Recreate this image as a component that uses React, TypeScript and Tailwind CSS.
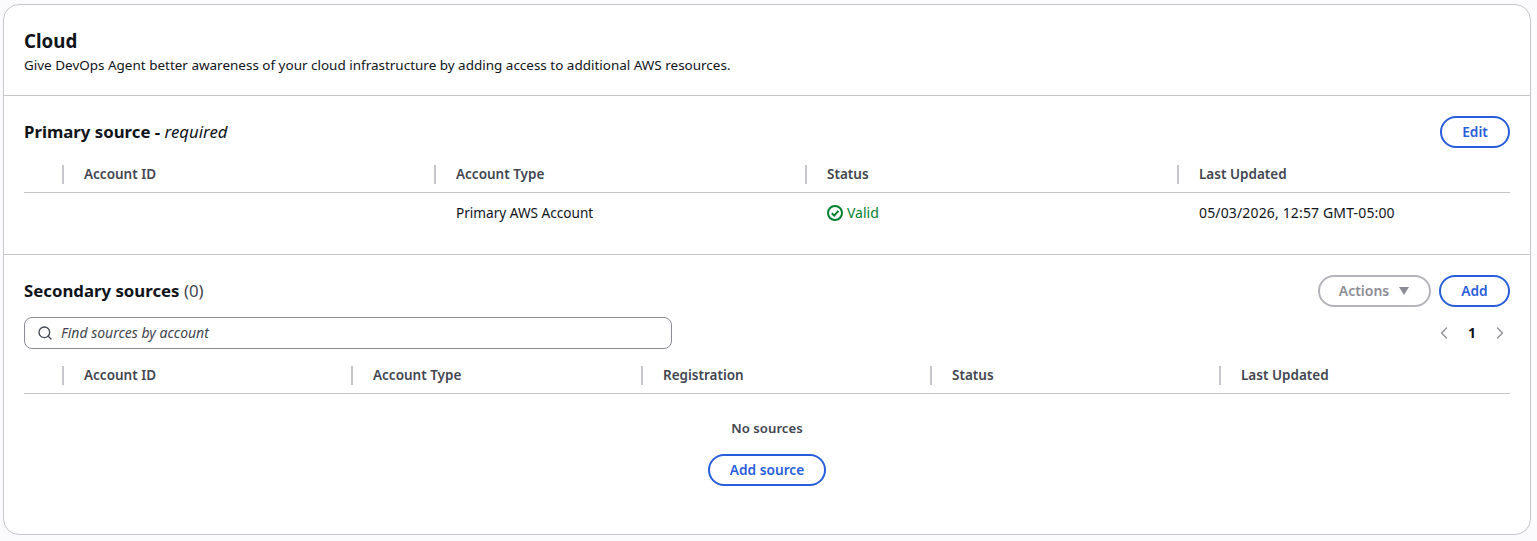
import { Search, ChevronLeft, ChevronRight } from 'lucide-react';

function PillButton({ label, className = '' }: { label: string; className?: string }) {
  return (
    <button className={`h-8 rounded-full border-2 border-[#295eda] bg-white text-[13.7px] font-semibold text-[#295eda] ${className}`}>
      {label}
    </button>
  );
}

function HeaderCell({ label }: { label: string }) {
  return (
    <div className="flex h-[19px] items-center border-l-2 border-[#c6c6cd] pl-[20px] text-[13.5px] font-semibold text-[#424650]">
      {label}
    </div>
  );
}

function TableHeader({ columns, grid }: { columns: string[]; grid: string }) {
  return (
    <div className={`grid h-[37px] items-center border-b border-[#c6c6cd] ${grid}`}>
      <div />
      {columns.map((c) => (
        <HeaderCell key={c} label={c} />
      ))}
    </div>
  );
}

export default function App() {
  return (
    <div className="h-[541px] w-[1537px] bg-[#fbfbfd] pl-[3px] pr-[6px] pt-1 font-['Noto_Sans',sans-serif] text-[#0f141a]">
      <div className="h-[531px] overflow-hidden rounded-2xl border border-[#c6c6cd] bg-white">
        {/* Header */}
        <div className="h-[91px] border-b border-[#c6c6cd] px-5 pt-[24px]">
          <h2 className="text-[18.7px] leading-[24px] font-bold">Cloud</h2>
          <p className="text-[13.47px] leading-[24px] text-[#0f141a]">
            Give DevOps Agent better awareness of your cloud infrastructure by adding access to additional AWS resources.
          </p>
        </div>

        {/* Primary source */}
        <div className="h-[159px] border-b border-[#c6c6cd] px-5 pt-[20px]">
          <div className="flex h-[32px] items-center justify-between">
            <h3 className="text-[16.8px] font-bold">
              Primary source - <em className="font-normal">required</em>
            </h3>
            <PillButton label="Edit" className="w-[70px]" />
          </div>
          <TableHeader
            grid="mt-[8px] grid-cols-[38px_372px_371px_372px_1fr]"
            columns={['Account ID', 'Account Type', 'Status', 'Last Updated']}
          />
          <div className="grid h-[40px] grid-cols-[38px_372px_371px_372px_1fr] items-center text-sm">
            <div />
            <div />
            <div className="pl-[22px] text-[13.6px]">Primary AWS Account</div>
            <div className="flex items-center gap-1 pl-[22px] text-[#00802f]">
              <svg viewBox="0 0 16 16" className="h-4 w-4" fill="none" stroke="currentColor" strokeWidth="2">
                <circle cx="8" cy="8" r="7" />
                <path d="M4.8 8.2 7.2 10.6 11.4 5.8" />
              </svg>
              Valid
            </div>
            <div className="pl-[22px] tracking-[0.15px]">05/03/2026, 12:57 GMT-05:00</div>
          </div>
        </div>

        {/* Secondary sources */}
        <div className="px-5 pt-[20px]">
          <div className="flex h-[32px] items-center justify-between">
            <h3 className="text-[16.8px] font-bold">
              Secondary sources <span className="font-normal text-[#424650]">(0)</span>
            </h3>
            <div className="flex gap-2">
              <button className="flex h-8 w-[113px] items-center justify-center gap-[9px] rounded-full border-2 border-[#b4b4bb] bg-white text-sm font-semibold text-[#8c8c94]">
                Actions
                <svg viewBox="0 0 12 10" className="h-[10px] w-3" fill="currentColor">
                  <path d="M1 1h10L6 9z" />
                </svg>
              </button>
              <PillButton label="Add" className="w-[71px]" />
            </div>
          </div>
          <div className="mt-[10px] flex h-8 items-center justify-between">
            <div className="flex h-8 w-[648px] items-center gap-2 rounded-lg border border-[#8c8c94] pl-3 text-sm italic text-[#424650]">
              <Search className="h-4 w-4" strokeWidth={2} />
              Find sources by account
            </div>
            <div className="flex items-center gap-[14px] text-[#8c8c94]">
              <ChevronLeft className="h-5 w-5" strokeWidth={1.5} />
              <span className="text-sm font-bold text-[#0f141a]">1</span>
              <ChevronRight className="h-5 w-5" strokeWidth={1.5} />
            </div>
          </div>
          <TableHeader
            grid="mt-[8px] grid-cols-[38px_289px_290px_289px_289px_1fr]"
            columns={['Account ID', 'Account Type', 'Registration', 'Status', 'Last Updated']}
          />
          <div className="flex flex-col items-center pt-[24px]">
            <div className="text-[13.2px] leading-5 font-semibold text-[#424650]">No sources</div>
            <PillButton label="Add source" className="mt-[16px] w-[118px]" />
          </div>
        </div>
      </div>
    </div>
  );
}
